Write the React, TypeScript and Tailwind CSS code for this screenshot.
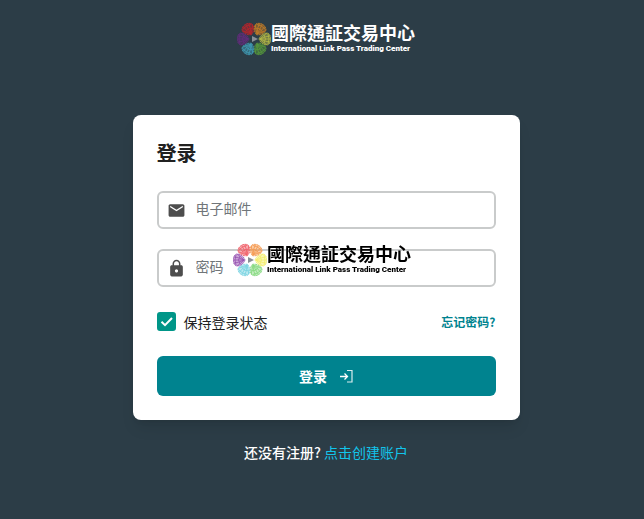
import { useState } from "react";
import type { FC, ReactNode } from "react";
import { MdEmail, MdLock } from "react-icons/md";

type Petal = { angle: number; dark: string; light: string };
type FieldProps = {
    id: string;
    type: string;
    label: string;
    icon: ReactNode;
};

const petals: Petal[] = [
    { angle: 0, dark: "#b5ba45", light: "#f3ee6a" },
    { angle: 60, dark: "#55983c", light: "#86d97f" },
    { angle: 120, dark: "#3f9ab3", light: "#79d3e2" },
    { angle: 180, dark: "#622c7c", light: "#9650b0" },
    { angle: 240, dark: "#b8242b", light: "#f0606a" },
    { angle: 300, dark: "#c17c26", light: "#f59a50" },
];

const Flower: FC<{ dark?: boolean }> = ({ dark }) => (
    <svg viewBox="-17 -17 34 34" className="size-[34px] shrink-0" aria-hidden="true">
        {petals.map(({ angle, dark: d, light: l }) => (
            <g key={angle} transform={`rotate(${angle}) translate(11 0)`} stroke={dark ? d : l} fill="none">
                <path d="M-6 0C-5-3-2-6 2-6C4-6 6-3 6 0C6 3 4 6 2 6C-2 6-5 3-6 0Z" fill={dark ? d : l} fillOpacity="0.5" strokeWidth="0.8" strokeDasharray="2 .7" />
                <path d="M-5 0Q-1-4 2-6M-5 0Q1-3 5-3M-5 0H6M-5 0Q1 3 5 3M-5 0Q-1 4 2 6M-1-4Q2 0-1 4M3-5Q5 0 3 5" strokeWidth="0.8" />
            </g>
        ))}
        <path d="M-2-3L4 0L-2 3Z" fill="#8b9096" />
    </svg>
);

const Logo: FC<{ dark?: boolean }> = ({ dark }) => (
    <div className={`flex items-center font-bold whitespace-nowrap ${dark ? "text-white" : "text-black"}`}>
        <Flower dark={dark} />
        <div>
            <div className="font-['Noto_Sans_CJK_TC',sans-serif] text-[18px] leading-[20px]">國際通証交易中心</div>
            <div className="font-['Roboto',sans-serif] text-[8px] leading-[14px] font-black">International Link Pass Trading Center</div>
        </div>
    </div>
);

const Field: FC<FieldProps> = ({ id, type, label, icon }) => (
    <div className="flex h-[38px] items-center rounded-md border-2 border-[#c9cbcb] px-2 text-[#4d4d4d]">
        <label htmlFor={id} aria-label={label} className="shrink-0">{icon}</label>
        <input
            id={id}
            type={type}
            placeholder={label}
            className="ml-[10px] w-full min-w-0 bg-transparent pb-1 text-sm outline-none placeholder:text-[#707579]"
        />
    </div>
);

const App: FC = () => {
    const [remember, setRemember] = useState(true);

    return (
        <div className="min-h-screen bg-[#2c3d47] pt-[22px] pr-4 pb-8 pl-6 font-['Noto_Sans_CJK_SC',sans-serif] text-[#212121]">
            <header className="flex justify-center">
                <Logo dark />
            </header>

            <main className="mx-auto mt-[59px] w-full max-w-[387px]">
                <form className="rounded-lg bg-white p-6 shadow-lg" onSubmit={(e) => e.preventDefault()}>
                    <h1 className="mb-6 text-xl leading-[28px] font-bold">登录</h1>
                    <div className="flex flex-col gap-5">
                        <Field id="email" type="email" label="电子邮件" icon={<MdEmail className="size-[19px]" />} />
                        <Field id="password" type="password" label="密码" icon={<MdLock className="size-[19px]" />} />
                    </div>

                    <div className="my-6 flex h-[21px] items-center justify-between">
                        <div className="flex items-center gap-2">
                            <div className="grid size-[19px] place-items-center">
                                <input
                                    id="remember"
                                    type="checkbox"
                                    checked={remember}
                                    onChange={(e) => setRemember(e.target.checked)}
                                    className="peer col-start-1 row-start-1 size-[19px] appearance-none rounded-[3px] border-2 border-[#009688] checked:bg-[#009688]"
                                />
                                <svg viewBox="0 0 19 19" className="pointer-events-none invisible col-start-1 row-start-1 size-[19px] peer-checked:visible" aria-hidden="true">
                                    <path d="M4.5 9.8L8 13.2L15 6" fill="none" stroke="#fff" strokeWidth="2" />
                                </svg>
                            </div>
                            <label htmlFor="remember" className="text-sm leading-5">保持登录状态</label>
                        </div>
                        <a href="#forgot" className="text-xs font-bold text-[#00838f]">忘记密码?</a>
                    </div>

                    <button type="submit" className="flex h-10 w-full items-center justify-center gap-3 rounded-md bg-[#00838f] text-sm font-bold text-white">
                        登录
                        <svg viewBox="0 0 14 14" className="size-[14px]" fill="none" stroke="currentColor" aria-hidden="true">
                            <path d="M1 7.5H8M5.5 4.5L8.5 7.5L5.5 10.5" strokeWidth="1.3" />
                            <path d="M8 1.5H13V13H8" strokeWidth="1.2" strokeOpacity="0.85" />
                        </svg>
                    </button>
                </form>

                <p className="mt-[22px] text-center text-sm leading-5 font-medium text-white">
                    还没有注册? <a href="#register" className="font-normal text-[#12c5ec]">点击创建账户</a>
                </p>
            </main>

            {/* marca de agua centrada en la ventana */}
            <div className="pointer-events-none fixed inset-0 grid place-items-center">
                <Logo />
            </div>
        </div>
    );
};

export default App;
